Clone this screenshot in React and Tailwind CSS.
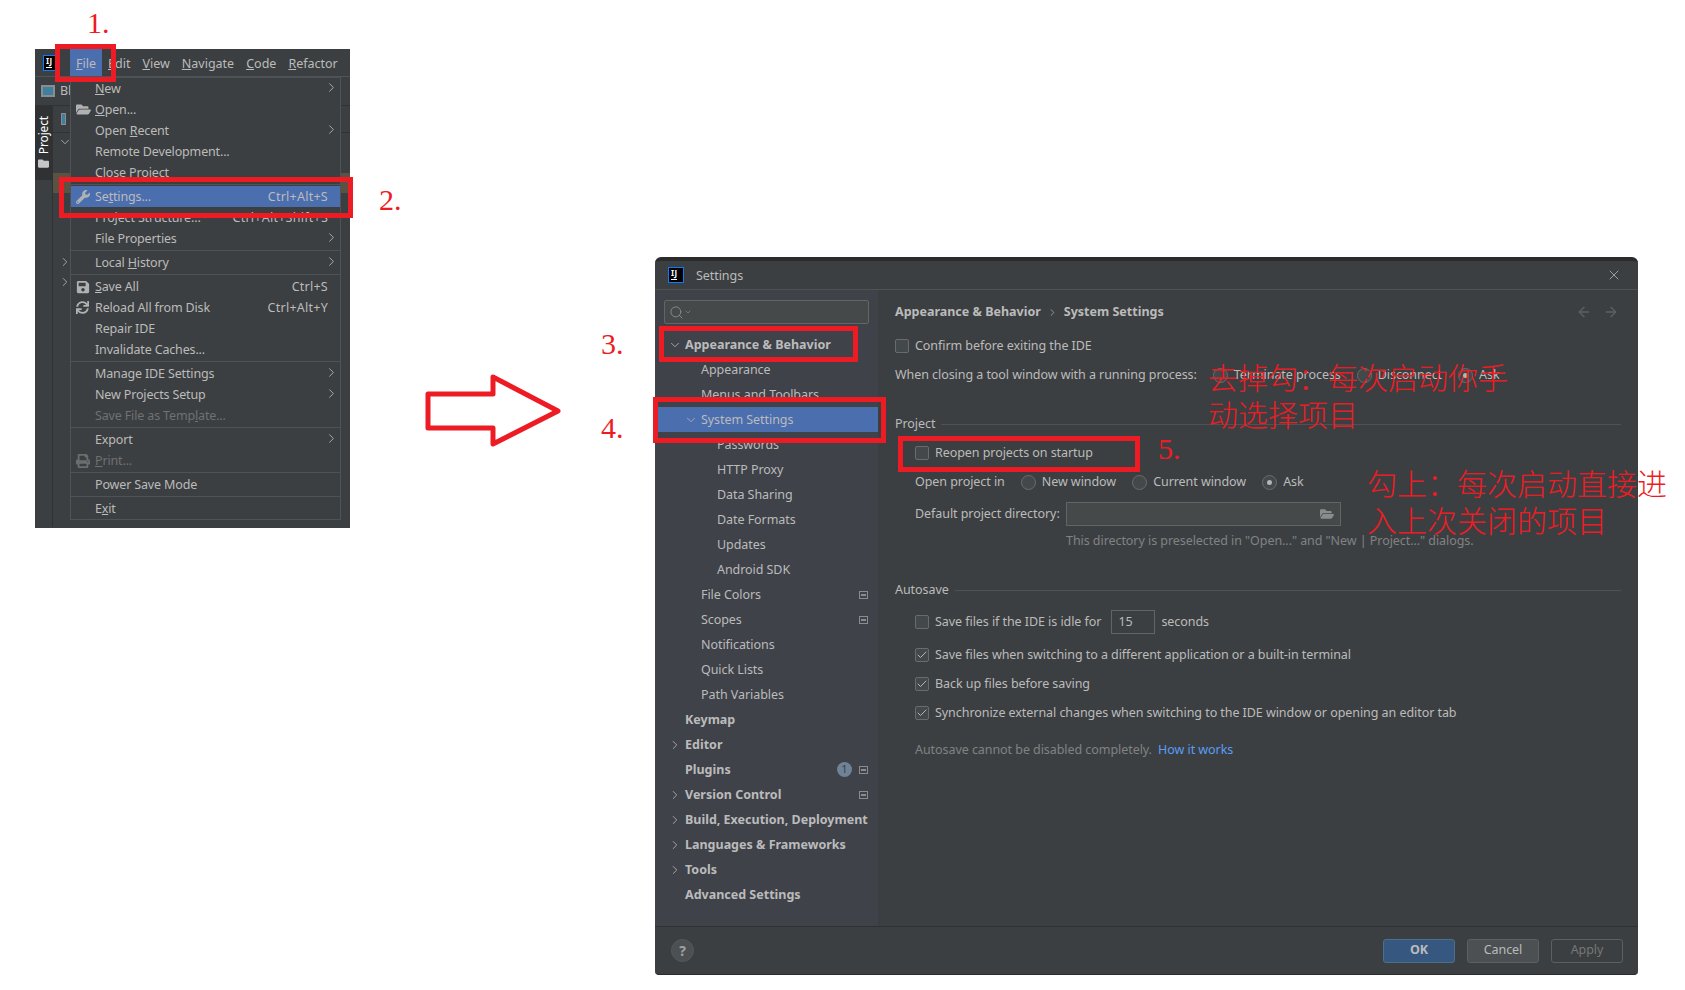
import { ArrowLeft, ArrowRight, Check, ChevronDown, ChevronRight, Search, X } from "lucide-react";
import { FaFolder, FaFolderOpen, FaPrint, FaSave, FaSync, FaWrench } from "react-icons/fa";

const MENU = [
  [
    { label: <><u>N</u>ew</>, arrow: true },
    { label: <><u>O</u>pen...</>, icon: <FaFolderOpen size={15} /> },
    { label: <>Open <u>R</u>ecent</>, arrow: true },
    { label: "Remote Development..." },
    { label: "Close Project" },
  ],
  [
    { label: <>Se<u>t</u>tings...</>, icon: <FaWrench size={14} />, shortcut: "Ctrl+Alt+S", active: true },
    { label: "Project Structure...", shortcut: "Ctrl+Alt+Shift+S" },
    { label: "File Properties", arrow: true },
  ],
  [{ label: <>Local <u>H</u>istory</>, arrow: true }],
  [
    { label: <><u>S</u>ave All</>, icon: <FaSave size={14} />, shortcut: "Ctrl+S" },
    { label: "Reload All from Disk", icon: <FaSync size={13} />, shortcut: "Ctrl+Alt+Y" },
    { label: "Repair IDE" },
    { label: "Invalidate Caches..." },
  ],
  [
    { label: "Manage IDE Settings", arrow: true },
    { label: "New Projects Setup", arrow: true },
    { label: <>Save File as Temp<u>l</u>ate...</>, disabled: true },
  ],
  [
    { label: "Export", arrow: true },
    { label: <><u>P</u>rint...</>, icon: <FaPrint size={14} />, disabled: true },
  ],
  [{ label: "Power Save Mode" }],
  [{ label: <>E<u>x</u>it</> }],
];

const TREE = [
  { label: "Appearance & Behavior", level: 0, open: true },
  { label: "Appearance", level: 1 },
  { label: "Menus and Toolbars", level: 1 },
  { label: "System Settings", level: 1, open: true, active: true },
  { label: "Passwords", level: 2 },
  { label: "HTTP Proxy", level: 2 },
  { label: "Data Sharing", level: 2 },
  { label: "Date Formats", level: 2 },
  { label: "Updates", level: 2 },
  { label: "Android SDK", level: 2 },
  { label: "File Colors", level: 1, project: true },
  { label: "Scopes", level: 1, project: true },
  { label: "Notifications", level: 1 },
  { label: "Quick Lists", level: 1 },
  { label: "Path Variables", level: 1 },
  { label: "Keymap", level: 0 },
  { label: "Editor", level: 0, closed: true },
  { label: "Plugins", level: 0, project: true, badge: "1" },
  { label: "Version Control", level: 0, closed: true, project: true },
  { label: "Build, Execution, Deployment", level: 0, closed: true },
  { label: "Languages & Frameworks", level: 0, closed: true },
  { label: "Tools", level: 0, closed: true },
  { label: "Advanced Settings", level: 0 },
];

function Logo() {
  return (
    <div className="w-4 h-4 shrink-0 bg-black border border-[#087cfa] flex flex-col px-[2px] pt-[1px]">
      <span className="text-[8px] leading-[8px] font-bold text-white tracking-[0.5px]">IJ</span>
      <span className="w-[6px] h-[1px] bg-white mt-[2px]" />
    </div>
  );
}

function MenuRow({ item }) {
  const rowColor = item.active ? "bg-[#4b6eaf]" : "";
  const textColor = item.disabled ? "text-[#6f7173]" : "text-[#bbbbbb]";
  return (
    <div className={`relative flex items-center h-[21px] pl-[24px] pr-[12px] ${rowColor} ${textColor}`}>
      {item.icon && <span className={`absolute left-[5px] ${item.disabled ? "text-[#6b6d6e]" : "text-[#afb1b3]"}`}>{item.icon}</span>}
      <span className="flex-1 whitespace-nowrap pt-[2px]">{item.label}</span>
      {item.shortcut && <span className="whitespace-nowrap pt-[2px] tracking-[0.25px]">{item.shortcut}</span>}
      {item.arrow && <ChevronRight size={15} strokeWidth={1.5} className="text-[#afb1b3] -mr-[11px] -mt-[3px]" />}
    </div>
  );
}

function IdeWindow() {
  return (
    <div className="absolute left-[35px] top-[49px] w-[315px] h-[479px] bg-[#3c3f41] text-[12.5px] tracking-[-0.15px]">
      <div className="flex items-center h-[28px] pl-[8px] border-b border-[#505355]">
        <Logo />
        <div className="flex ml-[11px] h-full text-[#bbbbbb] pt-[1px] tracking-normal">
          <span className="flex items-center px-[6px] bg-[#4b6eaf] -mt-[1px]"><span className="pt-[3px]"><u>F</u>ile</span></span>
          <span className="flex items-center px-[6px]"><span className="pt-[2px]"><u>E</u>dit</span></span>
          <span className="flex items-center px-[6px]"><span className="pt-[2px]"><u>V</u>iew</span></span>
          <span className="flex items-center px-[6px]"><span className="pt-[2px]"><u>N</u>avigate</span></span>
          <span className="flex items-center px-[6px]"><span className="pt-[2px]"><u>C</u>ode</span></span>
          <span className="flex items-center px-[6px]"><span className="pt-[2px]"><u>R</u>efactor</span></span>
        </div>
      </div>
      <div className="flex items-center h-[29px] pl-[6px] border-b border-[#323232] text-[#bbbbbb]">
        <span className="w-[14px] h-[12px] bg-[#40809e] border-2 border-[#8a8d8f]" />
        <span className="ml-[5px]">Bl</span>
      </div>
      <div className="flex h-[421px]">
        <div className="w-[18px] border-r border-[#2f3133]">
          <div className="flex flex-col items-center h-[74px] bg-[#2f3133] pt-[10px] gap-[4px]">
            <span className="text-white text-[12px] leading-[12px] [writing-mode:vertical-rl] rotate-180">Project</span>
            <FaFolder size={11} className="text-[#c4c6c8]" />
          </div>
        </div>
        <div className="flex-1 relative">
          <div className="flex items-center h-[27px] pl-[8px] border-b border-[#323232]">
            <span className="w-[5px] h-[12px] bg-[#40809e] border border-[#8a8d8f]" />
          </div>
          <ChevronDown size={14} strokeWidth={1.5} className="ml-[5px] mt-[2px] text-[#afb1b3]" />
          <div className="h-[20px] mt-[24px] bg-[#5a5344]" />
          <ChevronRight size={14} strokeWidth={1.5} className="ml-[5px] mt-[62px] text-[#afb1b3]" />
          <ChevronRight size={14} strokeWidth={1.5} className="ml-[5px] mt-[6px] text-[#afb1b3]" />
        </div>
      </div>
      {/* the open File menu */}
      <div className="absolute left-[35px] top-[28px] w-[271px] border border-[#505355] bg-[#3c3f41]">
        {MENU.map((group, i) => (
          <div key={i} className={i > 0 ? "relative pt-[3px]" : "relative"}>
            {i > 0 && <div className="absolute left-0 right-0 top-[1px] h-[1px] bg-[#505355]" />}
            {group.map((item, j) => <MenuRow key={j} item={item} />)}
          </div>
        ))}
      </div>
    </div>
  );
}

function ProjectMark() {
  return (
    <span className="w-[9px] h-[8px] border border-[#8a8d8f] flex items-center justify-center">
      <span className="w-[5px] h-[2px] bg-[#8a8d8f]" />
    </span>
  );
}

function TreeRow({ item }) {
  const pad = item.level === 0 ? "pl-[30px]" : item.level === 1 ? "pl-[46px]" : "pl-[62px]";
  const weight = item.level === 0 ? "font-bold tracking-normal" : "";
  const chevronLeft = item.level === 0 ? "left-[13px]" : "left-[29px]";
  return (
    <div className={`relative flex items-center h-[25px] pr-[10px] ${pad} ${weight} ${item.active ? "bg-[#4b6eaf] ml-[3px] !pl-[43px]" : ""}`}>
      {item.open && <ChevronDown size={14} strokeWidth={1.5} className={`absolute text-[#afb1b3] ${item.active ? "left-[26px]" : chevronLeft}`} />}
      {item.closed && <ChevronRight size={14} strokeWidth={1.5} className={`absolute text-[#afb1b3] ${chevronLeft}`} />}
      <span className="flex-1 whitespace-nowrap pt-[2px]">{item.label}</span>
      {item.badge && (
        <span className="w-[15px] h-[15px] rounded-full bg-[#6f8296] text-[#3c3f41] text-[11px] font-normal flex items-center justify-center mr-[7px]">{item.badge}</span>
      )}
      {item.project && <ProjectMark />}
    </div>
  );
}

function CheckBox({ checked, label }) {
  return (
    <div className="flex items-center gap-[6px]">
      <span className="w-[14px] h-[14px] rounded-[2px] border border-[#6b6b6b] bg-[#43494a] flex items-center justify-center">
        {checked && <Check size={12} strokeWidth={2} className="text-[#b4b6b8]" />}
      </span>
      <span className="whitespace-nowrap">{label}</span>
    </div>
  );
}

function Radio({ checked, label }) {
  return (
    <div className="flex items-center gap-[6px]">
      <span className="w-[15px] h-[15px] rounded-full border border-[#6b6b6b] bg-[#43494a] flex items-center justify-center">
        {checked && <span className="w-[5px] h-[5px] rounded-full bg-[#b4b6b8]" />}
      </span>
      <span className="whitespace-nowrap">{label}</span>
    </div>
  );
}

function SectionTitle({ title, className }) {
  return (
    <div className={`flex items-center h-5 gap-[6px] ${className}`}>
      <span>{title}</span>
      <span className="flex-1 h-[1px] bg-[#515151]" />
    </div>
  );
}

function SettingsDialog() {
  return (
    <div className="absolute left-[655px] top-[257px] w-[983px] h-[718px] flex flex-col bg-[#3c3f41] border-t-4 border-b border-t-[#2b2b2b] border-b-[#2b2b2b] rounded-t-[6px] rounded-b-[4px] text-[12.5px] tracking-[-0.06px] text-[#bbbbbb]">
      <div className="flex items-center h-[29px] pl-[13px] pr-[16px] border-b border-[#515151] shrink-0">
        <Logo />
        <span className="ml-[12px] flex-1 pt-[3px]">Settings</span>
        <X size={16} strokeWidth={1.25} className="text-[#afb1b3]" />
      </div>
      <div className="flex flex-1 min-h-0">
        <div className="w-[223px] bg-[#3f4249] pt-[10px] shrink-0">
          <div className="mx-[9px] h-[24px] flex items-center pl-[4px] bg-[#45494a] border border-[#646464] rounded-[2px]">
            <Search size={15} strokeWidth={1.5} className="text-[#8a8d8f]" />
            <ChevronDown size={8} className="text-[#8a8d8f]" />
          </div>
          <div className="mt-[8px]">
            {TREE.map((item) => <TreeRow key={item.label} item={item} />)}
          </div>
        </div>
        <div className="flex-1 pl-[17px] pr-[17px]">
          <div className="flex items-center h-5 mt-[12px] font-bold tracking-normal pr-[2px]">
            <span>Appearance &amp; Behavior</span>
            <ChevronRight size={11} className="mx-[6px] text-[#9a9c9e]" />
            <span>System Settings</span>
            <span className="flex-1" />
            <ArrowLeft size={16} className="text-[#5d6063]" />
            <ArrowRight size={16} className="ml-[11px] text-[#5d6063]" />
          </div>
          <div className="h-5 mt-[15px]"><CheckBox label="Confirm before exiting the IDE" /></div>
          <div className="flex items-center h-5 mt-[8px] gap-[16px]">
            <span className="whitespace-nowrap">When closing a tool window with a running process:</span>
            <Radio label="Terminate process" />
            <Radio label="Disconnect" />
            <Radio checked label="Ask" />
          </div>
          <SectionTitle title="Project" className="mt-[29px]" />
          <div className="pl-[20px]">
            <div className="h-5 mt-[10px]"><CheckBox label="Reopen projects on startup" /></div>
            <div className="flex items-center h-5 mt-[8px] gap-[16px]">
              <span className="whitespace-nowrap">Open project in</span>
              <Radio label="New window" />
              <Radio label="Current window" />
              <Radio checked label="Ask" />
            </div>
            <div className="flex items-center h-[24px] mt-[10px] gap-[6px]">
              <span className="whitespace-nowrap">Default project directory:</span>
              <div className="w-[275px] h-[24px] flex items-center justify-end pr-[6px] bg-[#45494a] border border-[#646464]">
                <FaFolderOpen size={14} className="text-[#8a8d8f]" />
              </div>
            </div>
            <div className="h-5 mt-[5px] pl-[151px] text-[#808284] whitespace-nowrap leading-5">
              This directory is preselected in "Open..." and "New | Project..." dialogs.
            </div>
          </div>
          <SectionTitle title="Autosave" className="mt-[29px]" />
          <div className="pl-[20px]">
            <div className="flex items-center h-[24px] mt-[10px] gap-[6px]">
              <CheckBox label="Save files if the IDE is idle for" />
              <div className="w-[44px] h-[24px] ml-[4px] pl-[6px] flex items-center bg-[#3c3f41] border border-[#646464]">15</div>
              <span>seconds</span>
            </div>
            <div className="h-5 mt-[12px]"><CheckBox checked label="Save files when switching to a different application or a built-in terminal" /></div>
            <div className="h-5 mt-[9px]"><CheckBox checked label="Back up files before saving" /></div>
            <div className="h-5 mt-[9px]"><CheckBox checked label="Synchronize external changes when switching to the IDE window or opening an editor tab" /></div>
            <div className="h-5 mt-[16px] leading-5 text-[#808284] whitespace-nowrap">
              Autosave cannot be disabled completely. <span className="ml-[3px] text-[#589df6]">How it works</span>
            </div>
          </div>
        </div>
      </div>
      <div className="flex items-center h-[48px] pl-[16px] pr-[15px] border-t border-[#2f3133] shrink-0">
        <span className="w-[23px] h-[23px] rounded-full bg-[#4c5052] border border-[#55585a] text-[#a0a2a4] font-bold text-[14px] flex items-center justify-center">?</span>
        <span className="flex-1" />
        <button className="w-[72px] h-[24px] rounded-[3px] bg-[#365880] border border-[#4c708c] font-bold tracking-normal text-[#bbbbbb]">OK</button>
        <button className="w-[72px] h-[24px] ml-[12px] rounded-[3px] bg-[#4c5052] border border-[#5e6060]">Cancel</button>
        <button className="w-[72px] h-[24px] ml-[12px] rounded-[3px] border border-[#5e6060] text-[#777777]">Apply</button>
      </div>
    </div>
  );
}

function Note({ className, children }) {
  return (
    <div className={`absolute text-[#ed1c24] whitespace-nowrap ${className}`}>{children}</div>
  );
}

export default function App() {
  return (
    <div className="relative w-[1685px] h-[990px] overflow-hidden bg-white font-['Noto_Sans',sans-serif]">
      <IdeWindow />
      <SettingsDialog />

      {/* red annotations drawn over the two screenshots */}
      <div className="absolute left-[55px] top-[44px] w-[61px] h-[38px] border-[5px] border-[#ed1c24]" />
      <div className="absolute left-[59px] top-[177px] w-[294px] h-[41px] border-[5px] border-[#ed1c24]" />
      <div className="absolute left-[659px] top-[326px] w-[199px] h-[36px] border-[5px] border-[#ed1c24]" />
      <div className="absolute left-[653px] top-[397px] w-[233px] h-[46px] border-[5px] border-[#ed1c24]" />
      <div className="absolute left-[898px] top-[436px] w-[242px] h-[36px] border-[5px] border-[#ed1c24]" />

      <svg className="absolute left-[420px] top-[370px]" width="145" height="82" viewBox="420 370 145 82">
        <path d="M428 394 H493 V377 L558 411 L493 444 V428 H428 Z" fill="none" stroke="#ed1c24" strokeWidth="5" strokeLinejoin="round" />
      </svg>

      <Note className="left-[87px] top-[6px] font-['Liberation_Serif',serif] text-[30px] leading-[34px]">1.</Note>
      <Note className="left-[379px] top-[183px] font-['Liberation_Serif',serif] text-[30px] leading-[34px]">2.</Note>
      <Note className="left-[601px] top-[327px] font-['Liberation_Serif',serif] text-[30px] leading-[34px]">3.</Note>
      <Note className="left-[601px] top-[411px] font-['Liberation_Serif',serif] text-[30px] leading-[34px]">4.</Note>
      <Note className="left-[1158px] top-[432px] font-['Liberation_Serif',serif] text-[30px] leading-[34px]">5.</Note>

      <Note className="left-[1208px] top-[358px] font-['Noto_Sans_CJK_SC',sans-serif] font-light text-[30px] leading-[37px]">
        {"去掉勾\uFF1A每次启动你手"}<br />动选择项目
      </Note>
      <Note className="left-[1367px] top-[464px] font-['Noto_Sans_CJK_SC',sans-serif] font-light text-[30px] leading-[37px]">
        {"勾上\uFF1A每次启动直接进"}<br />入上次关闭的项目
      </Note>
    </div>
  );
}
